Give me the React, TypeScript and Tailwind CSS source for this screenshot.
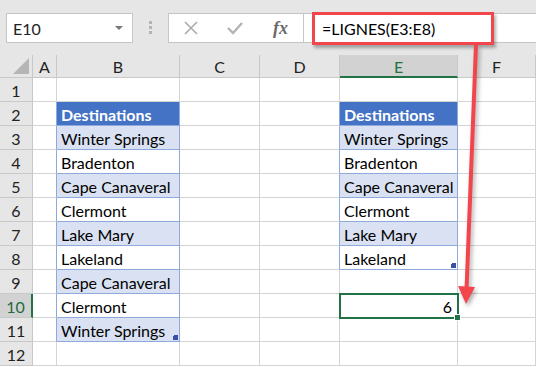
import React from 'react';

const B_DATA: Record<number, string> = {
  3: 'Winter Springs',
  4: 'Bradenton',
  5: 'Cape Canaveral',
  6: 'Clermont',
  7: 'Lake Mary',
  8: 'Lakeland',
  9: 'Cape Canaveral',
  10: 'Clermont',
  11: 'Winter Springs',
};

const ROWS = [1, 2, 3, 4, 5, 6, 7, 8, 9, 10, 11, 12];
const COLS = ['A', 'B', 'C', 'D', 'E', 'F'];

function inTable(col: string, row: number) {
  if (col === 'B') return row >= 2 && row <= 11;
  if (col === 'E') return row >= 2 && row <= 8;
  return false;
}

function Handle() {
  return (
    <svg className="absolute right-[1px] bottom-[1px]" width="5" height="5" viewBox="0 0 5 5">
      <rect x="0" y="1" width="5" height="4" fill="#3b4fa6" />
      <rect x="1" y="0" width="4" height="5" fill="#3b4fa6" />
    </svg>
  );
}

function Cell({ col, row }: { col: string; row: number }) {
  const table = inTable(col, row);
  const nextCol = COLS[COLS.indexOf(col) + 1];
  const leftOfTable = nextCol ? inTable(nextCol, row) : false;
  const isHeader = table && row === 2;
  const banded = table && row % 2 === 1;
  const isLast = (col === 'B' && row === 11) || (col === 'E' && row === 8);

  let text = '';
  if (col === 'B' || col === 'E') {
    if (row === 2) text = 'Destinations';
    else if (table) text = B_DATA[row];
  }
  const selected = col === 'E' && row === 10;

  const cls = [
    'relative flex items-center border-r border-b h-[24px] overflow-visible whitespace-nowrap text-[16px] pl-[4px] pt-[2px]',
    table || leftOfTable ? 'border-r-[#8ea9db]' : 'border-r-[#d4d4d4]',
    table ? 'border-b-[#8ea9db]' : 'border-b-[#d4d4d4]',
    isHeader ? 'bg-[#4472c4] text-white font-bold' : banded ? 'bg-[#d9e1f2] text-black' : 'bg-white text-black',
    selected ? 'justify-end pr-[5px] z-10' : '',
  ].join(' ');

  return (
    <div className={cls}>
      {text && <span>{text}</span>}
      {selected && (
        <>
          <span className="text-black">6</span>
          <div className="absolute -left-[1px] -top-[1px] w-[120px] h-[26px] border-2 border-[#217346] pointer-events-none" />
          <div className="absolute -right-[4px] -bottom-[4px] w-[7px] h-[7px] bg-[#217346] border border-white" />
        </>
      )}
      {isLast && <Handle />}
    </div>
  );
}

export default function App() {
  return (
    <div className="relative w-[536px] h-[367px] overflow-hidden bg-white" style={{ fontFamily: 'Lato, "Open Sans", sans-serif' }}>
      {/* Formula bar */}
      <div className="flex items-start h-[55px] bg-[#e6e6e6] pt-[13px]">
        <div className="ml-[6px] w-[127px] h-[30px] bg-white border border-[#c6c6c6] flex items-center justify-between pl-[6px] pr-[9px]">
          <span className="text-[16px] text-[#222] pt-[1px]">E10</span>
          <svg width="8" height="5" viewBox="0 0 8 5">
            <polygon points="0,0 8,0 4,4" fill="#777" />
          </svg>
        </div>
        <div className="ml-[16px] mt-[8px] flex flex-col gap-[2px]">
          <div className="w-[3px] h-[3px] bg-[#b4b4b4]" />
          <div className="w-[3px] h-[3px] bg-[#b4b4b4]" />
          <div className="w-[3px] h-[3px] bg-[#b4b4b4]" />
        </div>
        <div className="ml-[16px] w-[136px] h-[30px] bg-white border border-[#c6c6c6] flex items-center">
          <svg className="ml-[15px]" width="14" height="14" viewBox="0 0 14 14">
            <path d="M1 1 L13 13 M13 1 L1 13" stroke="#ababab" strokeWidth="1.6" />
          </svg>
          <svg className="ml-[29px]" width="16" height="13" viewBox="0 0 16 13">
            <path d="M1 6 L6 11 L15 1" stroke="#b4b4b4" strokeWidth="2.4" fill="none" />
          </svg>
          <span className="ml-[30px] text-[18px] italic font-bold text-[#6a6a6a]" style={{ fontFamily: '"Liberation Serif", serif' }}>fx</span>
        </div>
        <div className="flex-1 h-[30px] bg-white border-y border-[#c6c6c6] flex items-center pl-[18px]">
          <span className="text-[16px] text-black pt-[1px]">=LIGNES(E3:E8)</span>
        </div>
      </div>

      {/* Grid */}
      <div className="grid grid-cols-[33px_24px_123px_80px_80px_118px_78px]">
        <div className="relative h-[23px] bg-[#e6e6e6] border-r border-b border-[#c8c8c8] flex items-end justify-end pr-[3px] pb-[3px]">
          <svg width="16" height="16" viewBox="0 0 16 16">
            <polygon points="16,0 16,16 0,16" fill="#b5b5b5" />
          </svg>
        </div>
        {COLS.map((c) =>
          c === 'E' ? (
            <div key={c} className="h-[23px] bg-[#d2d2d2] border-r border-r-[#c8c8c8] border-b-2 border-b-[#217346] flex items-center justify-center text-[16px] text-[#217346] pt-[2px]">
              {c}
            </div>
          ) : (
            <div key={c} className="h-[23px] bg-[#e6e6e6] border-r border-b border-[#c8c8c8] flex items-center justify-center text-[16px] text-[#222] pt-[2px]">
              {c}
            </div>
          )
        )}
        {ROWS.map((r) => (
          <React.Fragment key={r}>
            {r === 10 ? (
              <div className="h-[24px] bg-[#d2d2d2] border-r-2 border-r-[#217346] border-b border-b-[#c8c8c8] flex items-center justify-center text-[16px] text-[#1e6b40] pt-[2px]">
                {r}
              </div>
            ) : (
              <div className="h-[24px] bg-[#e6e6e6] border-r border-b border-[#c8c8c8] flex items-center justify-center text-[16px] text-[#222] pt-[2px]">
                {r}
              </div>
            )}
            {COLS.map((c) => (
              <Cell key={c} col={c} row={r} />
            ))}
          </React.Fragment>
        ))}
      </div>

      {/* Annotation overlay: red box + arrow */}
      <div className="absolute z-20 left-[312px] top-[12px] w-[182px] h-[33px] border-[3px] border-[#f2454c] shadow-[2px_3px_3px_rgba(0,0,0,0.3)] pointer-events-none" />
      <svg className="absolute z-20 left-0 top-0 pointer-events-none" width="536" height="367" viewBox="0 0 536 367" style={{ filter: 'drop-shadow(2px 3px 2px rgba(0,0,0,0.3))' }}>
        <line x1="476" y1="45" x2="466.5" y2="290" stroke="#f2454c" strokeWidth="4" />
        <polygon points="458,286 475,287 466,304" fill="#f2454c" />
      </svg>
    </div>
  );
}
